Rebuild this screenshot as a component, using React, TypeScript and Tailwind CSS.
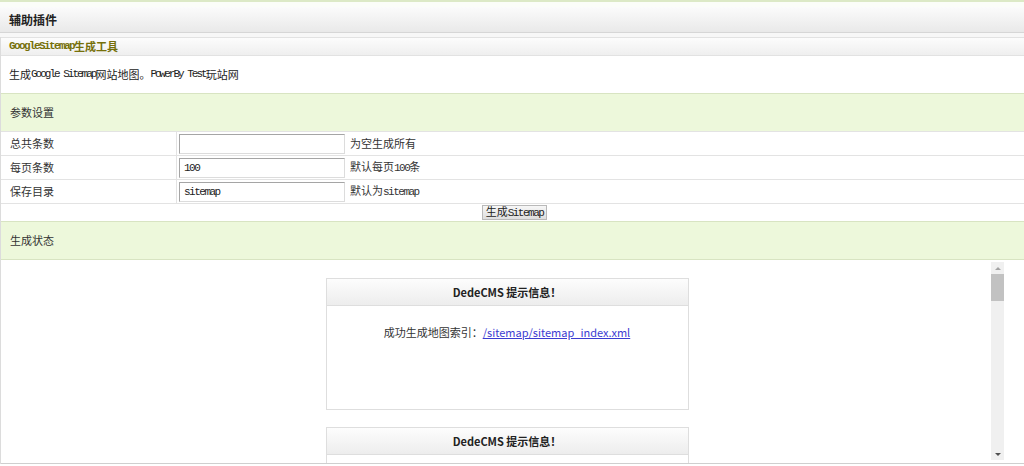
import React from 'react'

const cjk = { fontFamily: '"Noto Sans CJK SC", "Liberation Sans", sans-serif' }
const song = { fontFamily: '"Liberation Mono", "Noto Sans CJK SC", monospace' }

function FieldRow({ label, value, hint }: { label: string; value: string; hint: React.ReactNode }) {
    return (
        <div className="grid h-[24px] grid-cols-[176px_1fr] border-t border-[#e3e3e3]">
            <div className="flex items-center border-r border-[#e3e3e3] pl-[9px] text-[11px] text-[#333]">{label}</div>
            <div className="flex items-center pl-[2px]">
                <input
                    defaultValue={value}
                    className="h-[20px] w-[166px] border border-[#a5a5a5] border-b-[#dcdcdc] border-r-[#dcdcdc] bg-white px-[4px] text-[11px] text-[#222] outline-none tracking-[-1.5px]"
                    style={song}
                />
                <span className="ml-[5px] text-[11px] text-[#333]">{hint}</span>
            </div>
        </div>
    )
}

function MsgBox({ children }: { children?: React.ReactNode }) {
    return (
        <div className="w-[363px] border border-[#dedede] bg-white">
            <div className="flex h-[27px] items-center justify-center border-b border-[#dedede] bg-gradient-to-b from-[#fdfdfd] to-[#ededed] text-[11px] font-bold text-[#222]">
                DedeCMS 提示信息！
            </div>
            {children}
        </div>
    )
}

export default function App() {
    return (
        <div className="h-[466px] w-[1024px] overflow-hidden bg-white" style={cjk}>
            <div className="h-[2px] bg-[#dce9c6]" />
            <div className="h-[5px] bg-[#fbfdf8]" />

            <div className="flex h-[26px] items-center border-b border-[#d6d6d6] bg-gradient-to-b from-[#fbfbfb] to-[#e9e9e9] pl-[9px] text-[12px] font-bold text-[#222]">
                辅助插件
            </div>
            <div className="h-[4px] bg-[#f7f7f7]" />

            <div className="border-l border-[#dcdcdc]">
                <div className="flex h-[19px] items-center border-t border-b border-[#e2e2e2] bg-gradient-to-b from-[#fcfcfc] to-[#efefef] pl-[8px] text-[11px] font-bold text-[#76700a]">
                    <span style={song} className="tracking-[-1.6px]">GoogleSitemap</span>生成工具
                </div>

                <div className="flex h-[37px] items-center pl-[8px] text-[11px] text-[#222]">
                    生成<span style={song} className="tracking-[-2px]">Google Sitemap</span>网站地图。<span style={song} className="tracking-[-2px]">PowerBy Test</span>玩站网
                </div>

                <div className="flex h-[38px] items-center border-t border-[#d8e4c2] bg-[#edf8db] pl-[9px] text-[11px] text-[#333]">
                    参数设置
                </div>

                <FieldRow label="总共条数" value="" hint="为空生成所有" />
                <FieldRow label="每页条数" value="100" hint={<>默认每页<span style={song} className="tracking-[-1.5px]">100</span>条</>} />
                <FieldRow label="保存目录" value="sitemap" hint={<>默认为<span style={song} className="tracking-[-1.5px]">sitemap</span></>} />

                <div className="flex h-[18px] items-center justify-center border-t border-[#e3e3e3] pl-[4px]">
                    <button
                        className="h-[15px] border border-[#b9b9b9] bg-gradient-to-b from-[#f7f7f7] to-[#dedede] px-[3px] text-[11px] leading-none text-[#222]"
                        style={cjk}
                    >
                        生成<span style={song} className="tracking-[-1.5px]">Sitemap</span>
                    </button>
                </div>

                <div className="flex h-[39px] items-center border-t border-b border-[#d8e4c2] bg-[#edf8db] pl-[9px] text-[11px] text-[#333]">
                    生成状态
                </div>

                <div className="flex h-[204px] border-b border-[#cfcfcf]">
                    <div className="flex flex-1 flex-col items-center gap-[17px] overflow-hidden pl-[22px] pt-[18px]">
                        <MsgBox>
                            <div className="flex h-[103px] justify-center pt-[18px] text-[11px] text-[#333]">
                                <span>
                                    成功生成地图索引：
                                    <a href="#" className="text-[#3b3bd1] underline">/sitemap/sitemap_index.xml</a>
                                </span>
                            </div>
                        </MsgBox>
                        <MsgBox>
                            <div className="h-[40px]" />
                        </MsgBox>
                    </div>

                    <div className="mr-[20px] mt-[2px] mb-[3px] flex w-[13px] flex-col items-center bg-[#f0f0f0]">
                        <div className="flex h-[12px] items-center justify-center">
                            <div className="h-0 w-0 border-x-[3px] border-b-[3px] border-x-transparent border-b-[#a3a3a3]" />
                        </div>
                        <div className="h-[27px] w-full bg-[#c2c2c2]" />
                        <div className="flex-1" />
                        <div className="flex h-[12px] items-center justify-center">
                            <div className="h-0 w-0 border-x-[3px] border-t-[3px] border-x-transparent border-t-[#505050]" />
                        </div>
                    </div>
                </div>
            </div>
        </div>
    )
}
